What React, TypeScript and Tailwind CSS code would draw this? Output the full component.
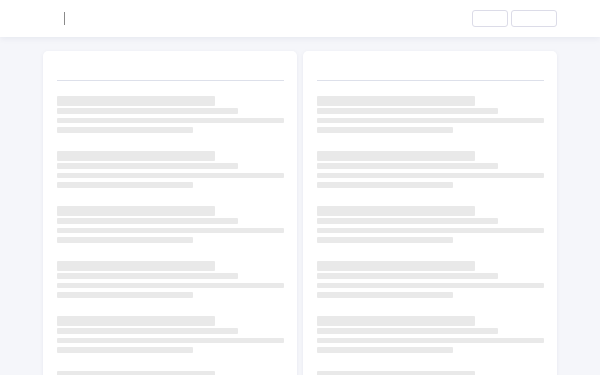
import React from 'react';

const groups = [0, 1, 2, 3, 4, 5];

const SkeletonCard: React.FC = () => (
  <div className="flex-1 bg-white rounded-[5px] shadow-[0_1px_4px_rgba(20,30,80,0.06)] px-[13.5px] pt-[29px] pb-4">
    <div className="h-px bg-[#dde0ea]" />
    <div className="mt-[15px] flex flex-col gap-[18.5px]">
      {groups.map(g => (
        <div key={g} className="flex flex-col">
          <div className="h-[9.5px] w-[70%] rounded-[1px] bg-[#e9e9e9]" />
          <div className="mt-[2px] h-[6px] w-[80%] rounded-[1px] bg-[#e9e9e9]" />
          <div className="mt-[4px] h-[5.5px] w-full rounded-[1px] bg-[#e9e9e9]" />
          <div className="mt-[4px] h-[5.5px] w-[60%] rounded-[1px] bg-[#e9e9e9]" />
        </div>
      ))}
    </div>
  </div>
);

const App: React.FC = () => {
  return (
    <div className="w-[600px] h-[375px] overflow-hidden bg-[#f5f6fa]" style={{ fontFamily: 'Inter, "Liberation Sans", sans-serif' }}>
      {/* header */}
      <header className="relative z-10 h-[37px] bg-white shadow-[0_2px_6px_rgba(20,30,80,0.06)] flex items-center justify-between pl-[64px] pr-[43px]">
        <div className="w-px h-[13px] bg-[#8a8a8a]" />
        <div className="flex items-center gap-[3px]">
          <div className="w-[36px] h-[17px] rounded-[3px] border border-[#dcdce8] bg-white" />
          <div className="w-[46px] h-[17px] rounded-[3px] border border-[#dcdce8] bg-white" />
        </div>
      </header>

      {/* content */}
      <main className="pt-[14px] px-[43px] flex gap-[6px]">
        <SkeletonCard />
        <SkeletonCard />
      </main>
    </div>
  );
};

export default App;
